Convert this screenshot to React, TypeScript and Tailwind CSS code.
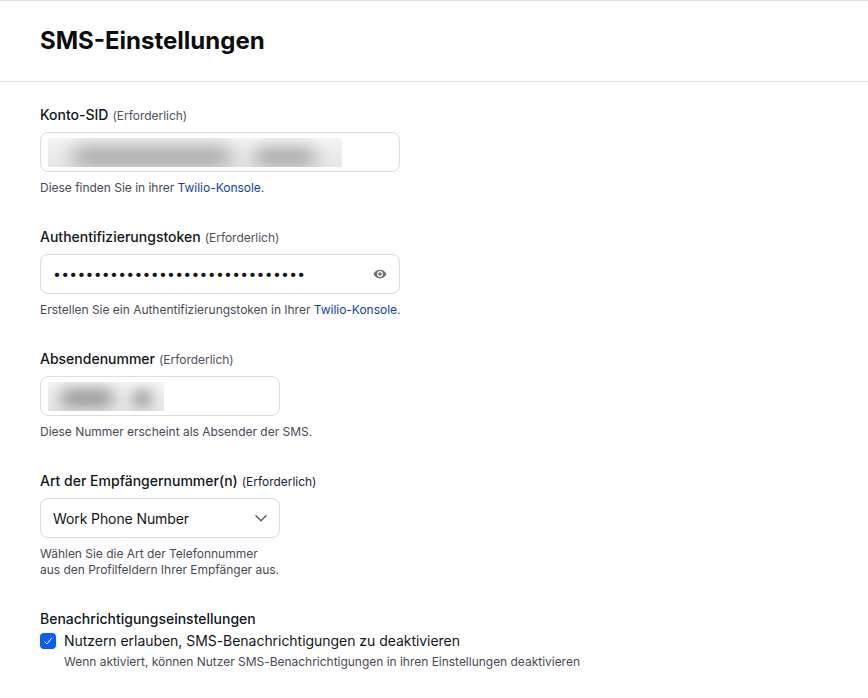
import React from "react";

const Required = ({ dark }: { dark?: boolean }) => (
  <span className={`ml-[4px] text-[12px] font-normal tracking-[-0.03px] ${dark ? "text-[#232333]" : "text-[#51515c]"}`}>(Erforderlich)</span>
);

const Label = ({ children, dark }: { children: React.ReactNode; dark?: boolean }) => (
  <div className="h-5 text-[14px] leading-5 font-medium text-[#131619]">
    {children}
    <Required dark={dark} />
  </div>
);

const Help = ({ children }: { children: React.ReactNode }) => (
  <p className="mt-[8px] text-[12px] leading-4 tracking-[-0.02px] text-[#4a4a55]">{children}</p>
);

const Link = ({ children }: { children: React.ReactNode }) => (
  <a className="text-[#0e43b0]">{children}</a>
);

const Redacted = ({ width, blobs }: { width: string; blobs: React.ReactNode }) => (
  <div className={`relative h-[29px] overflow-hidden bg-gradient-to-b from-[#f5f5f5] to-[#e6e6e8] ${width}`}>{blobs}</div>
);

export default function App() {
  return (
    <div className="min-h-[698px] w-[868px] overflow-hidden bg-white font-['Inter',sans-serif]">
      <header className="flex h-[82px] items-center border-y border-[#e0e0e2] px-10">
        <h1 className="text-[24px] leading-8 font-bold text-[#0b0d0f]">SMS-Einstellungen</h1>
      </header>

      <main className="flex flex-col gap-[31px] px-10 pt-[23px]">
        <section>
          <Label>Konto-SID</Label>
          <div className="mt-[7px] flex h-10 w-[360px] items-center rounded-lg border border-[#dcdcdf] pl-[7px]">
            <Redacted
              width="w-[294px]"
              blobs={
                <>
                  <div className="absolute top-[11px] left-[24px] h-[15px] w-[160px] rounded-full bg-[#8c8c8c] blur-[10px]" />
                  <div className="absolute top-[12px] left-[206px] h-[14px] w-[62px] rounded-full bg-[#8f8f8f] blur-[9px]" />
                </>
              }
            />
          </div>
          <Help>
            Diese finden Sie in ihrer <Link>Twilio-Konsole.</Link>
          </Help>
        </section>

        <section>
          <Label>Authentifizierungstoken</Label>
          <div className="mt-[7px] flex h-10 w-[360px] items-center justify-between rounded-lg border border-[#dcdcdf] pr-[12px] pl-[12px]">
            <span className="text-[14px] leading-none tracking-[0.27px] text-[#131619]">•••••••••••••••••••••••••••••••</span>
            <svg width="14" height="14" viewBox="0 0 24 24" fill="#6e6e78" aria-hidden="true">
              <path d="M12 4.5C7 4.5 2.7 7.6 1 12c1.7 4.4 6 7.5 11 7.5s9.3-3.1 11-7.5c-1.7-4.4-6-7.5-11-7.5zM12 17a5 5 0 1 1 0-10 5 5 0 0 1 0 10zm0-8a3 3 0 1 0 0 6 3 3 0 0 0 0-6z" />
            </svg>
          </div>
          <Help>
            Erstellen Sie ein Authentifizierungstoken in Ihrer <Link>Twilio-Konsole</Link>.
          </Help>
        </section>

        <section>
          <Label>Absendenummer</Label>
          <div className="mt-[7px] flex h-10 w-[240px] items-center rounded-lg border border-[#dcdcdf] pl-[7px]">
            <Redacted
              width="w-[116px]"
              blobs={
                <>
                  <div className="absolute top-[8px] left-[12px] h-[16px] w-[54px] rounded-full bg-[#8a8a8a] blur-[8px]" />
                  <div className="absolute top-[9px] left-[84px] h-[15px] w-[20px] rounded-full bg-[#8f8f8f] blur-[7px]" />
                </>
              }
            />
          </div>
          <Help>Diese Nummer erscheint als Absender der SMS.</Help>
        </section>

        <section>
          <Label dark>Art der Empfängernummer(n)</Label>
          <div className="mt-[7px] flex h-10 w-[240px] items-center justify-between rounded-lg border border-[#dcdcdf] pr-[11px] pl-3">
            <span className="text-[14px] tracking-[-0.1px] text-[#131619]">Work Phone Number</span>
            <svg width="14" height="14" viewBox="0 0 14 14" fill="none" stroke="#5a5a64" strokeWidth="1.4" aria-hidden="true">
              <path d="M1.5 4.2 7 9.7l5.5-5.5" />
            </svg>
          </div>
          <Help>
            Wählen Sie die Art der Telefonnummer
            <br />
            aus den Profilfeldern Ihrer Empfänger aus.
          </Help>
        </section>

        <section>
          <div className="h-5 text-[14px] leading-5 font-medium text-[#131619]">Benachrichtigungseinstellungen</div>
          <div className="mt-[2px] flex items-center gap-2">
            <span className="flex h-4 w-4 items-center justify-center rounded-[4px] bg-[#0b5cff]">
              <svg width="10" height="10" viewBox="0 0 10 10" fill="none" stroke="white" strokeWidth="1" aria-hidden="true">
                <path d="M1.5 5.5 4 8l4.8-6.2" />
              </svg>
            </span>
            <span className="text-[14px] leading-5 tracking-[-0.04px] text-[#131619]">Nutzern erlauben, SMS-Benachrichtigungen zu deaktivieren</span>
          </div>
          <p className="mt-[3px] ml-6 text-[12px] leading-4 tracking-[-0.02px] text-[#4a4a55]">
            Wenn aktiviert, können Nutzer SMS-Benachrichtigungen in ihren Einstellungen deaktivieren
          </p>
        </section>
      </main>
    </div>
  );
}
